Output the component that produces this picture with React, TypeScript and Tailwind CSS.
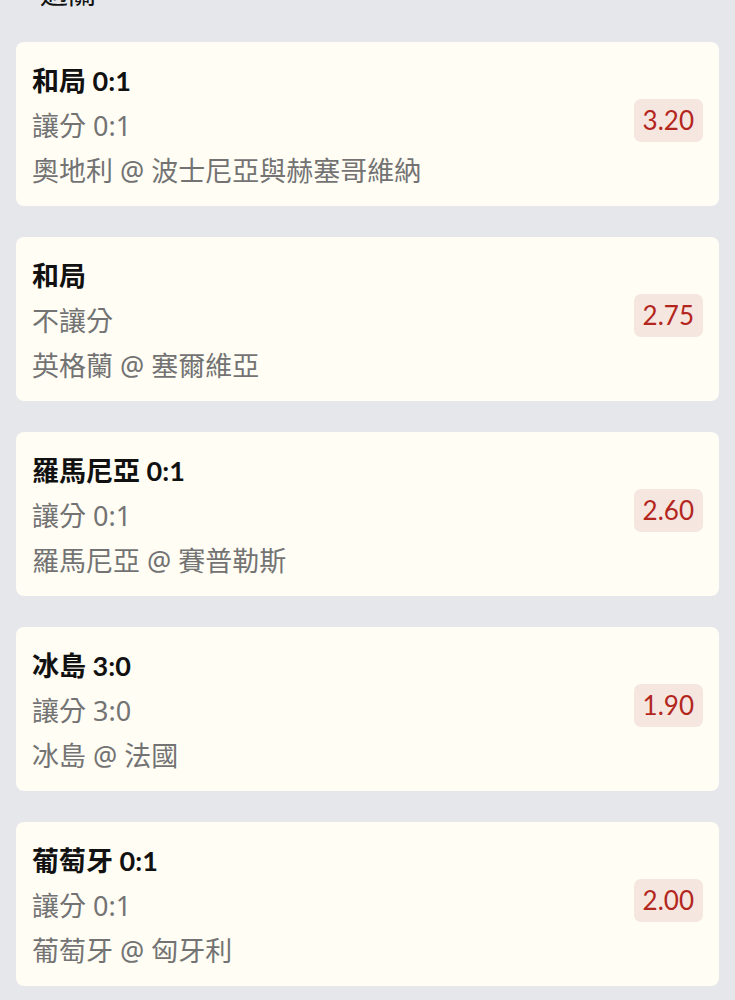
import React from 'react';

interface Bet {
  id: string;
  pick: string;
  market: string;
  match: string;
  odds: string;
}

const bets: Bet[] = [
  { id: '1', pick: '和局 0:1', market: '讓分 0:1', match: '奧地利 @ 波士尼亞與赫塞哥維納', odds: '3.20' },
  { id: '2', pick: '和局', market: '不讓分', match: '英格蘭 @ 塞爾維亞', odds: '2.75' },
  { id: '3', pick: '羅馬尼亞 0:1', market: '讓分 0:1', match: '羅馬尼亞 @ 賽普勒斯', odds: '2.60' },
  { id: '4', pick: '冰島 3:0', market: '讓分 3:0', match: '冰島 @ 法國', odds: '1.90' },
  { id: '5', pick: '葡萄牙 0:1', market: '讓分 0:1', match: '葡萄牙 @ 匈牙利', odds: '2.00' }
];

const font = { fontFamily: 'Lato, "Noto Sans CJK TC", sans-serif' };
const sub = { fontFamily: '"Noto Sans", "Noto Sans CJK TC", sans-serif' };

const BetCard = ({ pick, market, match, odds }: Bet) => {
  return (
    <div className="bg-[#fffdf4] rounded-[8px] px-4 pt-4 pb-[13px] flex items-center">
      <div className="flex-1 text-[27px] leading-[45px]">
        <div className="font-bold text-[#111111]">{pick}</div>
        <div className="text-[#737373]" style={sub}>{market}</div>
        <div className="text-[#737373]" style={sub}>{match}</div>
      </div>
      <div className="bg-[#f6e6e0] text-[#b3261e] rounded-[7px] h-[43px] px-[9px] mb-[10px] flex items-center text-[26px]">
        {odds}
      </div>
    </div>
  );
};

export default function App() {
  return (
    <div className="min-h-[1000px] bg-[#e5e7eb] overflow-hidden" style={font}>
      <div className="-mt-[21px] h-[29px] px-10 text-[28px] leading-[29px] text-[#111111]">過關</div>
      <div className="mt-[34px] px-4 flex flex-col gap-[31px] pb-6">
        {bets.map((b) => (
          <BetCard key={b.id} {...b} />
        ))}
      </div>
    </div>
  );
}
